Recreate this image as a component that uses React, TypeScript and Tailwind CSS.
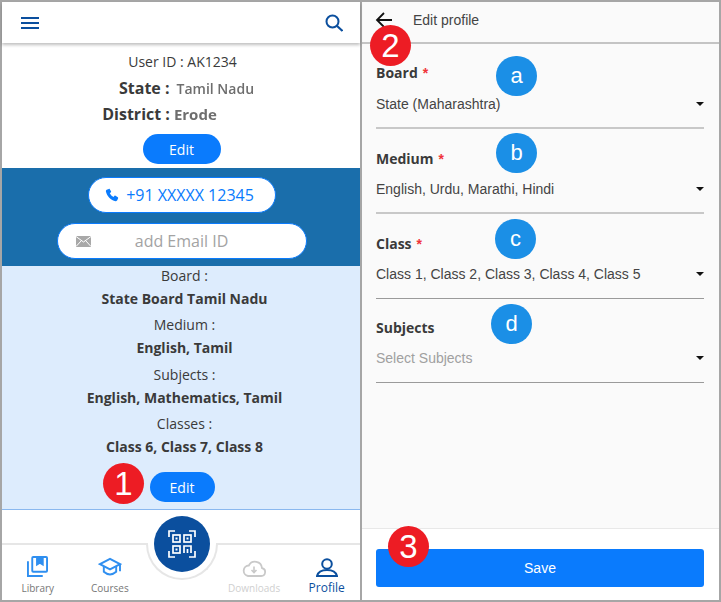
import { ReactNode } from "react";

const OPEN = "font-['Open_Sans','Noto_Sans',sans-serif]";
const ARIAL = "font-['Liberation_Sans',Arial,sans-serif]";

function Badge({ n, className }: { n: string; className: string }) {
  return (
    <span
      className={`absolute z-20 flex h-[41px] w-[41px] items-center justify-center rounded-full bg-[#ed1c24] text-[33px] leading-none text-white ${ARIAL} ${className}`}
    >
      {n}
    </span>
  );
}

function Step({ n, className }: { n: string; className: string }) {
  return (
    <span
      className={`absolute z-10 flex h-[40px] w-[41px] items-center justify-center rounded-full bg-[#1b8fe6] text-[22px] leading-none text-white ${ARIAL} ${className}`}
    >
      {n}
    </span>
  );
}

function NavItem({ icon, label, className, shift }: { icon: ReactNode; label: string; className: string; shift?: string }) {
  return (
    <div className={`flex flex-col items-center ${shift ?? ""}`}>
      <div className="flex h-[32px] items-end justify-center">{icon}</div>
      <span className={`mt-[4px] leading-[14px] ${className}`}>{label}</span>
    </div>
  );
}

interface FieldProps {
  label: string;
  required?: boolean;
  value: string;
  muted?: boolean;
  line: string;
  labelTop: string;
  valueTop: string;
}

function Field({ label, required, value, muted, line, labelTop, valueTop }: FieldProps) {
  return (
    <div className={line}>
      <div className={`text-[14px] font-bold leading-[20px] text-[#3a3a3a] ${labelTop} ${OPEN}`}>
        {label}
        {required && <span className={`ml-[5px] text-[#f0333a] ${ARIAL}`}>*</span>}
      </div>
      <div className={`flex items-center justify-between ${valueTop}`}>
        <span className={`text-[14px] leading-[20px] ${muted ? "text-[#a0a0a0]" : "text-[#444]"} ${ARIAL}`}>{value}</span>
        <span className="h-0 w-0 border-x-[4px] border-t-[4px] border-x-transparent border-t-[#111]" />
      </div>
    </div>
  );
}

export default function App() {
  return (
    <div className="flex h-[602px] w-[721px] overflow-hidden bg-white">
      {/* Left phone */}
      <div className={`relative flex h-[602px] w-[361px] flex-col border-2 border-r-[1px] border-[#a6a6a6] text-[#3a3a3a] ${OPEN}`}>
        <header className="z-10 flex h-[41px] shrink-0 items-center justify-between pl-[19px] pr-[17px] shadow-[0_2px_3px_rgba(0,0,0,0.25)]">
          <svg width="18" height="12" viewBox="0 0 18 12" fill="#0b4f9e">
            <rect y="0" width="18" height="2" />
            <rect y="5" width="18" height="2" />
            <rect y="10" width="18" height="2" />
          </svg>
          <svg width="18" height="18" viewBox="0 0 18 18" fill="none" stroke="#0b4f9e" strokeWidth="2">
            <circle cx="7.500" cy="7.500" r="6" />
            <path d="M11.800 11.800 17.500 17" strokeWidth="2.200" />
          </svg>
        </header>

        <section className="flex h-[125px] shrink-0 flex-col items-center pt-[9px]">
          <div className="ml-[3px] text-[14px] leading-[20px]">User ID : AK1234</div>
          <div className="ml-[11px] mt-[6px] flex h-[20px] items-center text-[16px] font-bold">
            State :
            <span className="ml-[7px] text-[14px] font-semibold text-[#6e6e6e] blur-[0.5px]">Tamil Nadu</span>
          </div>
          <div className="ml-[-43px] mt-[6px] flex h-[20px] items-center text-[16px] font-bold">
            District :
            <span className="ml-[4px] text-[15px] font-bold text-[#6e6e6e] blur-[0.5px]">Erode</span>
          </div>
          <button className="ml-[1px] mt-[10px] h-[30px] w-[78px] rounded-full bg-[#0a7bfd] text-[14px] text-white">Edit</button>
        </section>

        <section className="flex h-[98px] shrink-0 flex-col items-center bg-[#1a6eab] pt-[9px]">
          <div className="ml-[1px] flex h-[36px] w-[188px] items-center justify-center gap-[7px] rounded-full border border-[#0a7bfd] bg-white pr-[4px] text-[16px] text-[#0a7bfd]">
            <svg width="14" height="14" viewBox="0 0 24 24" fill="#0a7bfd">
              <path d="M6.600 1.500 2.800 3c-1 .5-1.500 1.500-1.300 2.600C3 14 10 21 18.400 22.500c1.100.2 2.100-.3 2.600-1.300l1.500-3.800c.2-.6 0-1.200-.5-1.600l-4-2.600c-.6-.3-1.200-.3-1.700.2l-1.700 1.900c-2.700-1.300-5.100-3.800-6.400-6.400l1.900-1.700c.5-.5.5-1.100.2-1.700L8.200 2c-.4-.5-1-.7-1.600-.5z" />
            </svg>
            +91 XXXXX 12345
          </div>
          <div className="relative ml-[1px] mt-[10px] flex h-[36px] w-[250px] items-center justify-center rounded-full border border-[#0a7bfd] bg-white text-[16px] text-[#a3a3a3]">
            <svg className="absolute left-[18px]" width="15" height="11" viewBox="0 0 15 11">
              <rect width="15" height="11" fill="#a8a8a8" />
              <path d="M0 .5 7.500 6 15 .5M0 10.500 5.500 4.500M15 10.500 9.500 4.500" fill="none" stroke="#fff" strokeWidth="1" />
            </svg>
            add Email ID
          </div>
        </section>

        <section className="relative flex h-[244px] shrink-0 flex-col items-center border-b border-[#8ab8ef] bg-[#ddecfd] pl-[7px] text-[14px]">
          <div className="mt-[-2px] flex flex-col items-center leading-[24px]">
            <div className="h-[23px]">Board :</div>
            <div className="h-[26px] font-bold">State Board Tamil Nadu</div>
            <div className="h-[23px]">Medium :</div>
            <div className="h-[27px] font-bold">English, Tamil</div>
            <div className="h-[23px]">Subjects :</div>
            <div className="h-[26px] font-bold">English, Mathematics, Tamil</div>
            <div className="h-[23px]">Classes :</div>
            <div className="h-[26px] font-bold">Class 6, Class 7, Class 8</div>
          </div>
          <button className="ml-[-5px] mt-[11px] h-[30px] w-[65px] rounded-full bg-[#0a7bfd] text-white">Edit</button>
          <Badge n="1" className="left-[101px] top-[197px]" />
        </section>

        <div className="flex-1" />

        <nav className="relative grid h-[57px] shrink-0 grid-cols-5 border-t-2 border-[#e6e6e6] text-[10px]">
          <NavItem
            label="Library"
            className="text-[#777]"
            icon={
              <svg width="21" height="21" viewBox="0 0 22 22" fill="none" stroke="#2f8ff0" strokeWidth="2">
                <rect x="5.500" y="1" width="15.500" height="15.500" rx="1" />
                <path d="M1 5.500V21h15.500" />
                <path d="M10.500 1h6v8l-3-2-3 2z" fill="#2f8ff0" />
              </svg>
            }
          />
          <NavItem
            label="Courses"
            shift="ml-[1px]"
            className="text-[#777]"
            icon={
              <svg width="24" height="20" viewBox="0 0 24 21" fill="none" stroke="#2f8ff0" strokeWidth="2">
                <path d="M12 2 1.500 7.500 12 13l10.500-5.500z" />
                <path d="M5.500 10v5.500c4 3.500 9 3.500 13 0V10" />
                <path d="M22.500 7.500V15" />
              </svg>
            }
          />
          <div />
          <NavItem
            label="Downloads"
            shift="ml-[3px]"
            className="text-[#d0d0d0]"
            icon={
              <svg width="24" height="17" viewBox="0 0 24 17" fill="none" stroke="#c9c9c9" strokeWidth="1.800">
                <path d="M6 16h13a4 4 0 0 0 1-7.900A7 7 0 0 0 6.800 5.500 5.300 5.300 0 0 0 6 16z" />
                <path d="M12 6.500v5M9.500 10l2.500 2.500L14.500 10" strokeWidth="1.600" />
              </svg>
            }
          />
          <NavItem
            label="Profile"
            shift="ml-[5px]"
            className="text-[12px] text-[#0b4f9e]"
            icon={
              <svg width="22" height="19" viewBox="0 0 22 19" fill="none" stroke="#0b4f9e" strokeWidth="2">
                <circle cx="11" cy="6" r="4.800" />
                <path d="M1 18c1-4 5-6 10-6s9 2 10 6z" />
              </svg>
            }
          />
          <div className="absolute left-[144px] top-[-2px] h-[37px] w-[72px] rounded-b-full border-2 border-t-0 border-[#e6e6e6] bg-white" />
        </nav>
        <div className="absolute left-[152px] top-[514px] z-10 flex h-[56px] w-[56px] items-center justify-center rounded-full bg-[#0b4f9e]">
          <svg width="28" height="28" viewBox="0 0 28 28" fill="none" stroke="#fff" strokeWidth="1.700">
            <path d="M1 7V1h6M21 1h6v6M27 21v6h-6M7 27H1v-6" />
            <rect x="5" y="5" width="7" height="7" />
            <rect x="16" y="5" width="7" height="7" />
            <rect x="5" y="16" width="7" height="7" />
            <path d="M16 23v-7h7v7M19.500 19v4" />
            <rect x="7.500" y="7.500" width="2" height="2" fill="#fff" stroke="none" />
            <rect x="18.500" y="7.500" width="2" height="2" fill="#fff" stroke="none" />
            <rect x="7.500" y="18.500" width="2" height="2" fill="#fff" stroke="none" />
          </svg>
        </div>
      </div>

      {/* Right phone */}
      <div className="relative flex h-[602px] w-[360px] flex-col border-y-2 border-r-2 border-l-[1px] border-[#a6a6a6] bg-[#fafafa]">
        <header className={`flex h-[42px] shrink-0 items-center border-b-2 border-[#c4c4c4] pb-[4px] pl-[13px] text-[14px] text-[#444] ${ARIAL}`}>
          <svg width="18" height="16" viewBox="0 0 18 16" fill="none" stroke="#111" strokeWidth="1.800">
            <path d="M17 8H2M9 1 2 8l7 7" />
          </svg>
          <span className="ml-[20px]">Edit profile</span>
        </header>
        <Badge n="2" className="left-[8px] top-[23px]" />

        <div className="flex-1 pl-[14px] pr-[15px]">
          <Field label="Board" required value="State (Maharashtra)" line="h-[85px] border-b-2 border-[#c8c8c8]" labelTop="pt-[19px]" valueTop="mt-[11px]" />
          <Field label="Medium" required value="English, Urdu, Marathi, Hindi" line="h-[85px] border-b-2 border-[#c8c8c8]" labelTop="pt-[20px]" valueTop="mt-[10px]" />
          <Field label="Class" required value="Class 1, Class 2, Class 3, Class 4, Class 5" line="h-[85px] border-b border-[#9a9a9a]" labelTop="pt-[20px]" valueTop="mt-[10px]" />
          <Field label="Subjects" value="Select Subjects" muted line="h-[84px] border-b border-[#9a9a9a]" labelTop="pt-[19px]" valueTop="mt-[10px]" />
        </div>
        <Step n="a" className="left-[134px] top-[54px]" />
        <Step n="b" className="left-[134px] top-[131px]" />
        <Step n="c" className="left-[133px] top-[217px]" />
        <Step n="d" className="left-[129px] top-[302px]" />

        <footer className="flex h-[72px] shrink-0 items-start border-t border-[#e8e8e8] bg-white pl-[14px] pr-[15px] pt-[20px]">
          <button className={`h-[38px] w-full rounded-[3px] bg-[#0a7bfd] text-[14px] text-white ${ARIAL}`}>Save</button>
        </footer>
        <Badge n="3" className="left-[26px] top-[524px]" />
      </div>
    </div>
  );
}
